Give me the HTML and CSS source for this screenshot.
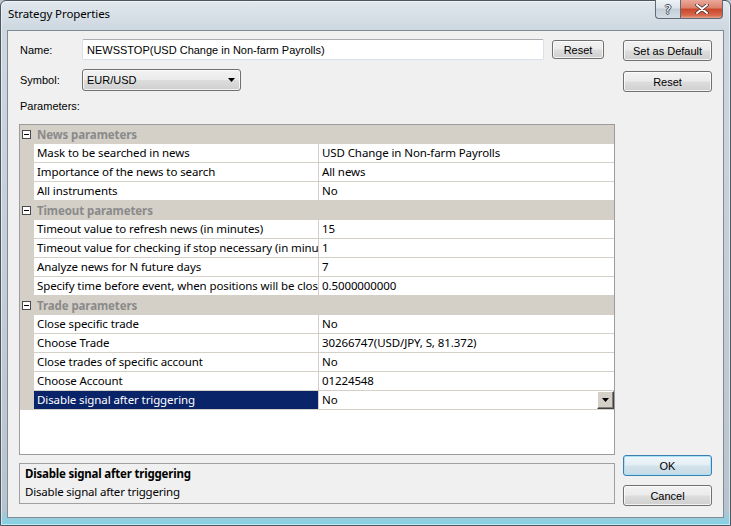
FILE: index.html
```html
<!DOCTYPE html>
<html lang="en">
<head>
  <meta charset="UTF-8" />
  <title>Strategy Properties</title>
  <link rel="stylesheet" href="styles.css">
</head>
<body>

  <div class="window">
    <div class="titlebar">
      <span class="title">Strategy Properties</span>
      <div class="caption-buttons">
        <span class="cap-btn help">?</span>
        <span class="cap-btn close">
          <svg width="14" height="10" viewBox="0 0 14 10">
            <path d="M2 1 L12 9 M12 1 L2 9" stroke="#3a2a2a" stroke-width="3.4" stroke-linecap="round" />
            <path d="M2 1 L12 9 M12 1 L2 9" stroke="#fff" stroke-width="2" stroke-linecap="round" />
          </svg>
        </span>
      </div>
    </div>

    <div class="client">
      <div class="main">
        <div class="field-row">
          <span class="label">Name:</span>
          <input type="text" class="text-input" value="NEWSSTOP(USD Change in Non-farm Payrolls)" />
          <button class="btn btn-small">Reset</button>
        </div>

        <div class="field-row symbol-row">
          <span class="label">Symbol:</span>
          <div class="combo">
            <span>EUR/USD</span>
            <svg width="7" height="4" viewBox="0 0 7 4"><path d="M0 0 H7 L3.5 4 Z" fill="#000" /></svg>
          </div>
        </div>

        <div class="params-label">Parameters:</div>

        <div class="grid">
          <div class="cat"><span class="toggle"></span>News parameters</div>
          <div class="row"><div class="name">Mask to be searched in news</div><div class="value">USD Change in Non-farm Payrolls</div></div>
          <div class="row"><div class="name">Importance of the news to search</div><div class="value">All news</div></div>
          <div class="row"><div class="name">All instruments</div><div class="value">No</div></div>

          <div class="cat"><span class="toggle"></span>Timeout parameters</div>
          <div class="row"><div class="name">Timeout value to refresh news (in minutes)</div><div class="value">15</div></div>
          <div class="row"><div class="name">Timeout value for checking if stop necessary (in minutes)</div><div class="value">1</div></div>
          <div class="row"><div class="name">Analyze news for N future days</div><div class="value">7</div></div>
          <div class="row"><div class="name">Specify time before event, when positions will be closed</div><div class="value">0.5000000000</div></div>

          <div class="cat"><span class="toggle"></span>Trade parameters</div>
          <div class="row"><div class="name">Close specific trade</div><div class="value">No</div></div>
          <div class="row"><div class="name">Choose Trade</div><div class="value">30266747(USD/JPY, S, 81.372)</div></div>
          <div class="row"><div class="name">Close trades of specific account</div><div class="value">No</div></div>
          <div class="row"><div class="name">Choose Account</div><div class="value">01224548</div></div>
          <div class="row selected">
            <div class="name">Disable signal after triggering</div>
            <div class="value">
              <span class="value-text">No</span>
              <span class="drop-btn">
                <svg width="7" height="4" viewBox="0 0 7 4"><path d="M0 0 H7 L3.5 4 Z" fill="#000" /></svg>
              </span>
            </div>
          </div>
        </div>

        <div class="desc">
          <div class="desc-title">Disable signal after triggering</div>
          <div>Disable signal after triggering</div>
        </div>
      </div>

      <div class="side">
        <button class="btn">Set as Default</button>
        <button class="btn">Reset</button>
        <button class="btn btn-default ok">OK</button>
        <button class="btn">Cancel</button>
      </div>
    </div>
  </div>

</body>
</html>
```

FILE: styles.css
```css
* {
  box-sizing: border-box;
}

body {
  margin: 0;
  padding: 0;
  width: 731px;
  height: 526px;
  background: #bcc7d1;
  font-family: 'Noto Sans', sans-serif;
  overflow: hidden;
}

.window {
  width: 731px;
  height: 526px;
  display: flex;
  flex-direction: column;
  padding: 0 6px 7px;
  border: 1px solid #4b5661;
  border-radius: 6px 6px 0 0;
  background: linear-gradient(180deg, #e1e8ee 0, #cdd7e0 30px, #c2ccd6 60%, #b7c3ce 97%, #7fd3e6 100%);
  box-shadow: inset 0 0 0 1px rgba(255, 255, 255, 0.55);
}

.titlebar {
  height: 29px;
  display: flex;
  align-items: flex-start;
  flex-shrink: 0;
}

.title {
  padding: 5px 0 0 1px;
  font-size: 11.5px;
  line-height: 16px;
  letter-spacing: -0.1px;
  color: #000;
}

.caption-buttons {
  margin-left: auto;
  margin-right: 1px;
  margin-top: -1px;
  display: flex;
}

.cap-btn {
  height: 19px;
  display: flex;
  justify-content: center;
  align-items: center;
  border: 1px solid #5f6a75;
  border-top: none;
}

.help {
  width: 25px;
  border-right: none;
  border-radius: 0 0 0 4px;
  background: linear-gradient(180deg, #eef2f5 0, #dbe3ea 45%, #c3ced8 50%, #d5dee6 100%);
  font-family: 'DejaVu Sans', sans-serif;
  font-size: 13px;
  color: #fff;
  text-shadow: 1px 0 0 #3e4852, -1px 0 0 #3e4852, 0 1px 0 #3e4852, 0 -1px 0 #3e4852;
}

.close {
  width: 43px;
  border-radius: 0 0 4px 0;
  background: linear-gradient(180deg, #e9a99b 0, #dc7f6a 45%, #c8452b 50%, #d8684b 85%, #e4a48e 100%);
}

.client {
  flex: 1;
  display: flex;
  gap: 8px;
  padding: 8px 11px 11px;
  border: 1px solid #7f8b96;
  background: #f0f0f0;
}

.main {
  width: 596px;
  display: flex;
  flex-direction: column;
}

.label,
.params-label,
.btn,
.text-input,
.combo {
  font-family: 'Liberation Sans', sans-serif;
  font-size: 11px;
  color: #000;
}

.field-row {
  display: flex;
  align-items: center;
  height: 21px;
}

.symbol-row {
  margin-top: 9px;
  height: 22px;
}

.label {
  width: 63px;
  padding-left: 1px;
}

.text-input {
  width: 462px;
  height: 21px;
  padding: 0 4px;
  border: 1px solid #d9e0e7;
  border-top-color: #abadb3;
  border-radius: 2px;
  background: #fff;
}

.btn {
  height: 21px;
  padding: 0;
  border: 1px solid #707070;
  border-radius: 3px;
  background: linear-gradient(180deg, #f2f2f2 0, #ebebeb 48%, #dddddd 52%, #cfcfcf 100%);
  box-shadow: inset 0 0 0 1px rgba(255, 255, 255, 0.75);
}

.btn-small {
  width: 52px;
  height: 19px;
  margin-left: 8px;
}

.combo {
  width: 159px;
  height: 22px;
  display: flex;
  align-items: center;
  justify-content: space-between;
  padding: 0 5px 0 4px;
  border: 1px solid #707070;
  border-radius: 3px;
  background: linear-gradient(180deg, #f2f2f2 0, #ebebeb 48%, #dddddd 52%, #cfcfcf 100%);
  box-shadow: inset 0 0 0 1px rgba(255, 255, 255, 0.75);
}

.params-label {
  height: 33px;
  padding: 9px 0 0 1px;
}

.grid {
  height: 331px;
  border: 1px solid #9c9c9c;
  background: #fff;
  font-size: 11.5px;
  letter-spacing: -0.1px;
  color: #000;
}

.cat {
  height: 19px;
  display: flex;
  align-items: center;
  background: #d4d0c8;
  font-weight: bold;
  color: #8a8a8a;
}

.toggle {
  position: relative;
  width: 9px;
  height: 9px;
  margin: 0 6px 0 2px;
  border: 1px solid #4a4a4a;
  background: #fff;
}

.toggle::after {
  content: '';
  position: absolute;
  left: 1px;
  top: 3px;
  width: 5px;
  height: 1px;
  background: #000;
}

.row {
  height: 19px;
  display: flex;
  padding-left: 14px;
  border-bottom: 1px solid #d4d0c8;
  background: #d4d0c8;
}

.name,
.value {
  height: 18px;
  line-height: 18px;
  padding-left: 3px;
  background: #fff;
  white-space: nowrap;
  overflow: hidden;
}

.name {
  width: 285px;
  border-right: 1px solid #d4d0c8;
}

.value {
  flex: 1;
  display: flex;
}

.value-text {
  flex: 1;
}

.selected .name {
  background: #0a246a;
  color: #fff;
}

.drop-btn {
  width: 17px;
  height: 18px;
  display: flex;
  justify-content: center;
  align-items: center;
  background: #d4d0c8;
  border: 1px solid;
  border-color: #fff #404040 #404040 #fff;
  box-shadow: inset -1px -1px 0 #808080;
}

.desc {
  height: 41px;
  margin-top: 8px;
  padding: 1px 5px 0;
  border: 1px solid #a0a0a0;
  font-size: 11.5px;
  letter-spacing: -0.2px;
  line-height: 18px;
  color: #000;
}

.desc-title {
  font-weight: bold;
}

.side {
  width: 89px;
  display: flex;
  flex-direction: column;
}

.side .btn:first-child {
  margin-top: 1px;
}

.side .btn + .btn {
  margin-top: 10px;
}

.side .ok {
  margin-top: auto !important;
  margin-bottom: -1px;
}

.btn-default {
  border-color: #3c7fb1;
  box-shadow: inset 0 0 0 1px #a9e2f7;
  background: linear-gradient(180deg, #eef6fa 0, #e3eef4 48%, #d3e3ec 52%, #c6d9e4 100%);
}
```
